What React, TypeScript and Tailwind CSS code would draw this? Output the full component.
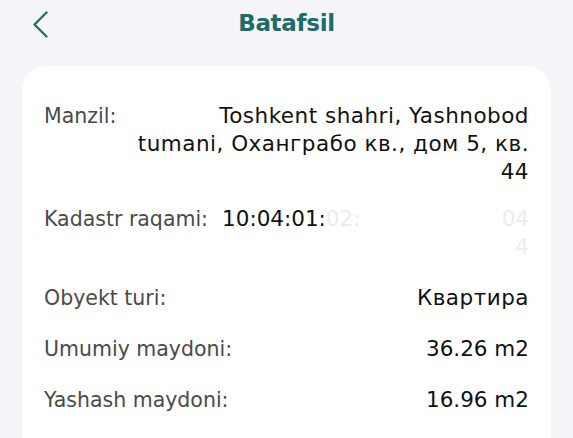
import type { ReactNode } from "react";

type Row = {
  label: string;
  value: ReactNode;
  extra?: string;
};

const ROWS: Row[] = [
  {
    label: "Manzil:",
    value: (
      <span className="tracking-[0.5px]">
        Toshkent shahri, Yashnobod
        <br />
        tumani, Охангрaбо кв., дом 5, кв.
        <br />
        44
      </span>
    ),
  },
  {
    label: "Kadastr raqami:",
    value: (
      <div className="flex flex-col">
        <div className="flex justify-between">
          <span>
            <span className="text-[#111]">10:04:01:</span>
            <span className="text-[#ececef]">02:</span>
          </span>
          <span className="text-[#ebebee]">04</span>
        </div>
        <div className="text-right text-[#ececef]">4</div>
      </div>
    ),
    extra: "mt-[-4px]",
  },
  { label: "Obyekt turi:", value: <span className="tracking-[0.5px]">Квартира</span> },
  { label: "Umumiy maydoni:", value: "36.26 m2" },
  { label: "Yashash maydoni:", value: "16.96 m2" },
];

export default function App() {
  return (
    <div
      className="h-[438px] w-[573px] overflow-hidden bg-[#f4f4f9]"
      style={{ fontFamily: '"DejaVu Sans", "Noto Sans", sans-serif' }}
    >
      <header className="relative flex h-[46px] items-center justify-center">
        <button type="button" className="absolute left-[32px] top-[11px]">
          <svg width="17" height="27" viewBox="0 0 17 27" fill="none">
            <path
              d="M14.5 1.5 L2.5 13.5 L14.5 25.5"
              stroke="#236f6d"
              strokeWidth="2.4"
              strokeLinecap="round"
              strokeLinejoin="round"
            />
          </svg>
        </button>
        <h1 className="text-[23px] font-bold tracking-[-0.3px] text-[#1f6b69]">Batafsil</h1>
      </header>

      <div className="mx-[22px] mt-[20px] rounded-[24px] bg-white px-[22px] pb-16 pt-[36px]">
        <div className="flex flex-col gap-[23px]">
          {ROWS.map((row) => (
            <div key={row.label} className={`flex items-start gap-[14px] ${row.extra ?? ""}`}>
              <span className="shrink-0 text-[20.5px] leading-[28px] text-[#4a4a4a]">
                {row.label}
              </span>
              <div className="min-w-0 flex-1 whitespace-nowrap text-right text-[21.5px] leading-[28px] text-[#111]">
                {row.value}
              </div>
            </div>
          ))}
        </div>
      </div>
    </div>
  );
}
